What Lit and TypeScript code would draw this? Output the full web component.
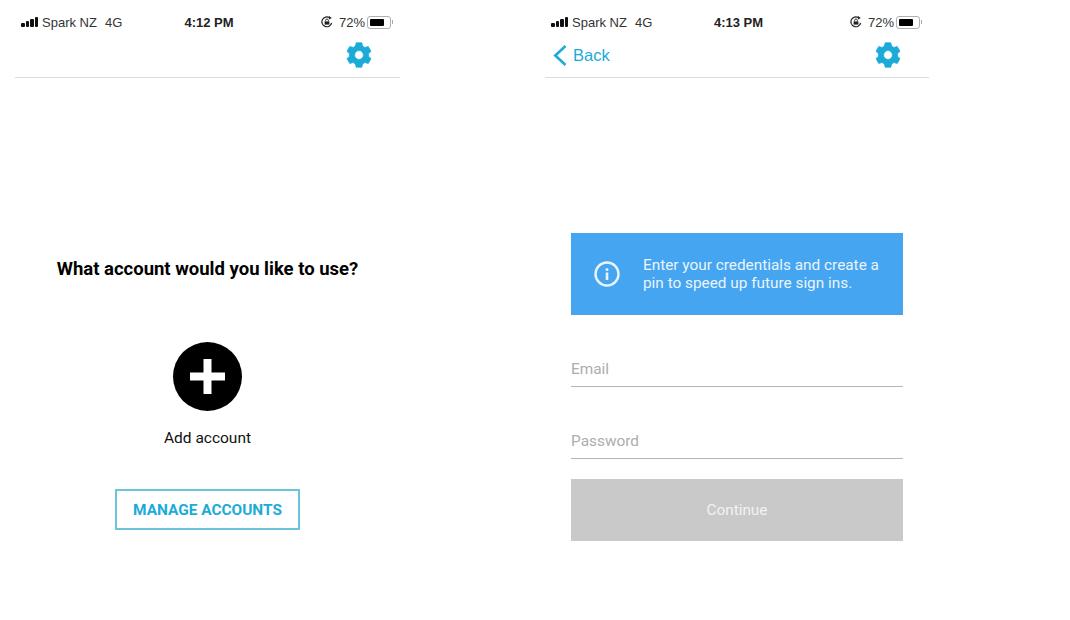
import { LitElement, html, css } from 'lit';
import { customElement, property } from 'lit/decorators.js';

// six chunky teeth around a hole, centred on 13,13
function gearPath() {
  const pt = (r: number, deg: number) => {
    const a = (deg * Math.PI) / 180;
    return `${(13 + r * Math.cos(a)).toFixed(2)} ${(13 + r * Math.sin(a)).toFixed(2)}`;
  };
  let d = '';
  for (let i = 0; i < 6; i++) {
    const c = -90 + i * 60;
    d += `${i ? 'L' : 'M'}${pt(9.6, c - 22)} L${pt(12.6, c - 13)} L${pt(12.6, c + 13)} L${pt(9.6, c + 22)} `;
  }
  return d + 'Z M13 8.6a4.4 4.4 0 1 0 0 8.8a4.4 4.4 0 1 0 0-8.8Z';
}

@customElement('phone-header')
export class PhoneHeader extends LitElement {
  @property() time = '';
  @property({ type: Boolean }) back = false;

  static styles = css`
    :host {
      display: block;
      font-family: "Liberation Sans", Arial, sans-serif;
    }

    .status {
      display: grid;
      grid-template-columns: 1fr auto 1fr;
      align-items: center;
      height: 18px;
      margin-top: 13px;
      padding: 0 6px;
      font-size: 13px;
      color: #333;
    }

    .left, .right {
      display: flex;
      align-items: center;
    }

    .right {
      justify-content: flex-end;
    }

    .signal {
      display: flex;
      align-items: flex-end;
      gap: 1px;
      height: 10px;
      margin-right: 4px;
    }

    .signal i {
      width: 3.5px;
      background: #111;
      border-radius: 1px;
    }

    .net {
      margin-left: 8px;
    }

    .time {
      padding-left: 3px;
      font-weight: bold;
      color: #222;
    }

    .lock {
      margin-right: 6px;
    }

    .batt {
      box-sizing: border-box;
      width: 24px;
      height: 13px;
      margin-left: 2px;
      padding: 2px;
      border: 1px solid #b0b0b0;
      border-radius: 3px;
    }

    .batt i {
      display: block;
      width: 76%;
      height: 100%;
      background: #000;
      border-radius: 1px;
    }

    .nub {
      width: 1px;
      height: 4px;
      margin-left: 1px;
      margin-right: 1px;
      background: #aaa;
    }

    nav {
      display: flex;
      justify-content: space-between;
      align-items: center;
      box-sizing: border-box;
      height: 47px;
      padding: 2px 28px 0 8px;
      border-bottom: 1px solid #dedede;
    }

    .back {
      display: flex;
      align-items: center;
      gap: 6px;
      font-size: 16.5px;
      color: #1cabd9;
    }

    .gear {
      margin-left: auto;
      display: block;
    }
  `;

  render() {
    return html`
      <div class="status">
        <div class="left">
          <span class="signal">
            <i style="height:4px"></i><i style="height:6px"></i><i style="height:8px"></i><i style="height:10px"></i>
          </span>
          <span>Spark NZ</span>
          <span class="net">4G</span>
        </div>
        <div class="time">${this.time}</div>
        <div class="right">
          <svg class="lock" width="12" height="12" viewBox="0 0 12 12" fill="none">
            <path d="M10.6 7A4.9 4.9 0 1 1 8.6 1.8" stroke="#222" stroke-width="1.2"/>
            <path d="M8 0l2.8 2-2.8 1.6z" fill="#222"/>
            <rect x="3.6" y="5.4" width="4.8" height="3.2" fill="#222"/>
            <path d="M4.6 5.4V4.4a1.4 1.4 0 0 1 2.8 0v1" stroke="#222" stroke-width=".9"/>
          </svg>
          <span>72%</span>
          <span class="batt"><i></i></span>
          <span class="nub"></span>
        </div>
      </div>
      <nav>
        ${this.back ? html`
          <div class="back">
            <svg width="14" height="23" viewBox="0 0 14 23" fill="none">
              <path d="M12.5 2L2.3 11.5 12.5 21" stroke="#1cabd9" stroke-width="2.6"/>
            </svg>
            <span>Back</span>
          </div>
        ` : ''}
        <svg class="gear" width="26" height="26" viewBox="0 0 26 26">
          <path d=${gearPath()} fill="#1cabd9" fill-rule="evenodd" stroke="#1cabd9" stroke-width=".7" stroke-linejoin="round"/>
        </svg>
      </nav>
    `;
  }
}

@customElement('app-root')
export class AppRoot extends LitElement {
  static styles = css`
    :host {
      display: grid;
      grid-template-columns: 385px 384px;
      column-gap: 145px;
      width: 1070px;
      height: 620px;
      padding-left: 15px;
      box-sizing: border-box;
      background: #fff;
      font-family: Roboto, sans-serif;
      overflow: hidden;
    }

    .account {
      display: flex;
      flex-direction: column;
      align-items: center;
      padding-top: 179px;
    }

    h1 {
      margin: 0;
      font-size: 18.5px;
      line-height: 24px;
      font-weight: bold;
      color: #000;
    }

    .add {
      display: flex;
      justify-content: center;
      align-items: center;
      width: 69px;
      height: 69px;
      margin-top: 61px;
      border-radius: 50%;
      background: #000;
    }

    .add-label {
      margin-top: 17px;
      font-size: 15.5px;
      line-height: 20px;
      color: #111;
    }

    .manage {
      display: flex;
      justify-content: center;
      align-items: center;
      box-sizing: border-box;
      width: 185px;
      height: 41px;
      margin-top: 41px;
      border: 2px solid #6cc4dc;
      font-size: 15.4px;
      font-weight: bold;
      color: #1cabd9;
    }

    .signin {
      display: flex;
      flex-direction: column;
      padding: 155px 26px 0;
    }

    .banner {
      display: flex;
      align-items: center;
      gap: 23px;
      height: 82px;
      padding-left: 23px;
      box-sizing: border-box;
      background: #45a5f0;
      color: #eaf4fd;
      font-size: 15.35px;
      line-height: 18px;
    }

    .field {
      display: flex;
      align-items: center;
      box-sizing: border-box;
      height: 36px;
      margin-top: 36px;
      border-bottom: 1px solid #b5b5b5;
      font-size: 15.4px;
      color: #adadad;
    }

    .continue {
      display: flex;
      justify-content: center;
      align-items: center;
      box-sizing: border-box;
      height: 62px;
      margin-top: 20px;
      padding-bottom: 1px;
      background: #c9c9c9;
      color: #f2f2f2;
      font-size: 15.3px;
    }
  `;

  render() {
    return html`
      <section>
        <phone-header time="4:12 PM"></phone-header>
        <div class="account">
          <h1>What account would you like to use?</h1>
          <div class="add">
            <svg width="35" height="35" viewBox="0 0 35 35">
              <path d="M13.5 0h8v13.500h13.500v8H21.500v13.500h-8V21.500H0v-8h13.500z" fill="#fff"/>
            </svg>
          </div>
          <div class="add-label">Add account</div>
          <div class="manage">MANAGE ACCOUNTS</div>
        </div>
      </section>
      <section>
        <phone-header time="4:13 PM" back></phone-header>
        <div class="signin">
          <div class="banner">
            <svg width="26" height="26" viewBox="0 0 26 26" fill="none">
              <circle cx="13" cy="13" r="11.5" stroke="#eaf4fd" stroke-width="2.4"/>
              <rect x="11.7" y="11.5" width="2.6" height="7.5" fill="#eaf4fd"/>
              <rect x="11.7" y="7.300" width="2.6" height="2.6" fill="#eaf4fd"/>
            </svg>
            <div>Enter your credentials and create a<br />pin to speed up future sign ins.</div>
          </div>
          <div class="field">Email</div>
          <div class="field">Password</div>
          <div class="continue">Continue</div>
        </div>
      </section>
    `;
  }
}
